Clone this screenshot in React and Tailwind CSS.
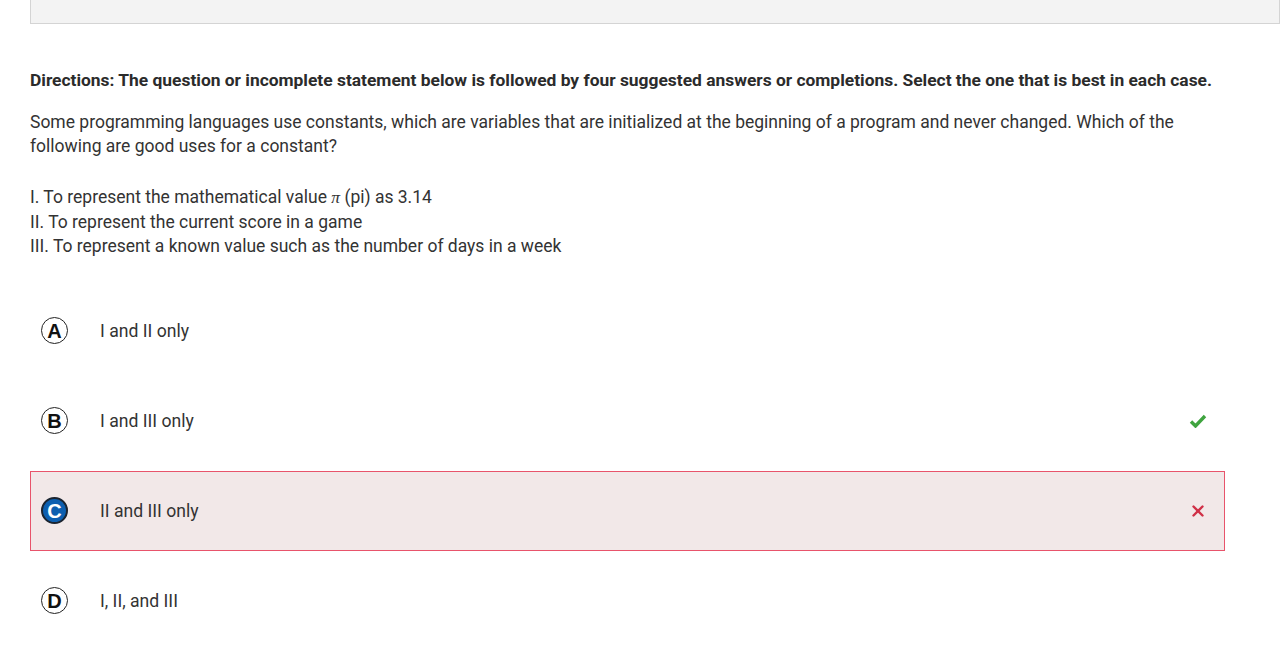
import { X } from 'lucide-react';

const options = [
  { letter: 'A', text: 'I and II only' },
  { letter: 'B', text: 'I and III only', correct: true },
  { letter: 'C', text: 'II and III only', selected: true, wrong: true },
  { letter: 'D', text: 'I, II, and III' },
];

const Option = ({ letter, text, correct, selected, wrong }) => (
  <div
    className={`flex items-center h-[80px] mb-[10px] border pl-[10px] ${
      wrong ? 'bg-[#f2e8e8] border-[#e8546b]' : 'border-transparent'
    }`}
  >
    <span
      className={`w-[27px] h-[27px] shrink-0 rounded-full flex items-center justify-center font-['Liberation_Sans',sans-serif] text-[20px] font-bold leading-none ${
        selected
          ? 'bg-[#0d5fb0] text-white border-2 border-[#1c2430]'
          : 'border-[1.5px] border-[#222] text-[#111]'
      }`}
    >
      {letter}
    </span>
    <span className="ml-[32px] pt-[1px] text-[17.6px] text-[#333]">{text}</span>
    <div className="ml-auto mr-[16px] w-[20px] flex justify-center">
      {correct && (
        <svg width="18" height="14" viewBox="0 0 18 14">
          <path d="M2 7.5 L6.5 12 L16 2" fill="none" stroke="#3fa43f" strokeWidth="3.4" />
        </svg>
      )}
      {wrong && <X size={18} strokeWidth={3.2} className="text-[#d03047]" />}
    </div>
  </div>
);

export default function App() {
  return (
    <div className="min-h-screen bg-white font-['Roboto',sans-serif] text-[#333]">
      <div className="ml-[30px] h-[24px] bg-[#f3f3f3] border border-t-0 border-[#d4d4d4]" />
      <div className="pl-[30px] pr-[55px] pt-[44px]">
        <p className="text-[17.4px] font-bold leading-6 text-[#2b2b2b]">
          Directions: The question or incomplete statement below is followed by four suggested answers or completions. Select the one that is best in each case.
        </p>
        <p className="mt-[18px] text-[17.5px] leading-6">
          Some programming languages use constants, which are variables that are initialized at the beginning of a program and never changed. Which of the following are good uses for a constant?
        </p>
        <div className="mt-[27px] text-[17.5px] leading-[24.5px]">
          <p>
            I. To represent the mathematical value <i className="font-['Liberation_Serif',serif]">π</i> (pi) as 3.14
          </p>
          <p>II. To represent the current score in a game</p>
          <p>III. To represent a known value such as the number of days in a week</p>
        </div>
        <div className="mt-[32px]">
          {options.map((o) => (
            <Option key={o.letter} {...o} />
          ))}
        </div>
      </div>
    </div>
  );
}
